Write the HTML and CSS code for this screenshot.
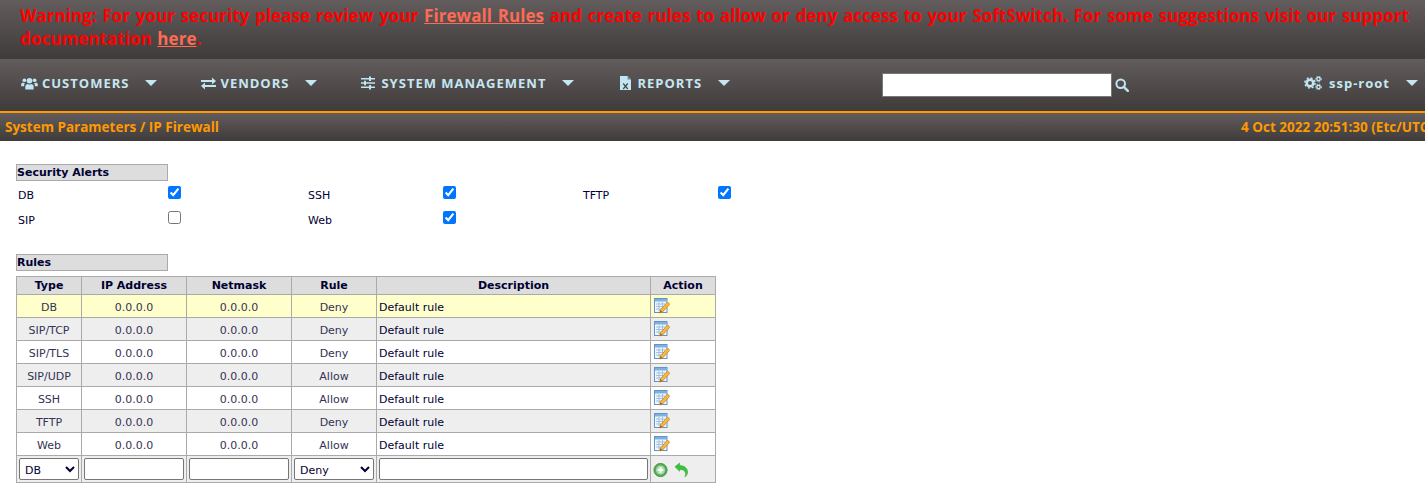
FILE: index.html
```html
<!DOCTYPE html>
<html lang="en">
<head>
<meta charset="utf-8">
<title>IP Firewall</title>
<link rel="stylesheet" href="styles.css">
</head>
<body>
<svg class="defs" width="0" height="0">
  <defs>
    <symbol id="edit" viewBox="0 0 16 16">
      <rect x="0.5" y="0.5" width="12.5" height="14" fill="#f2f7fc" stroke="#5f94cc"/>
      <rect x="1" y="1" width="12" height="2.500" fill="#7fb0e0"/>
      <path d="M2 6h9M2 8.500h9M2 11h9M5 4v9M8.500 4v9" stroke="#9dbfe3" stroke-width="1"/>
      <path d="M13.500 4l2.300 2.300-7.300 7.700-2.800 1 .6-3z" fill="#f7b93c" stroke="#c9802a" stroke-width=".8"/>
      <path d="M6.300 12l-.6 3 2.800-1z" fill="#a8642a"/>
    </symbol>
  </defs>
</svg>

<header class="warning">
  <p class="warning-text">Warning: For your security please review your <a href="#">Firewall Rules</a> and create rules to allow or deny access to your SoftSwitch. For some suggestions visit our support documentation <a href="#">here</a>.</p>
</header>

<nav class="nav">
  <div class="nav-item">
    <svg class="ico ico-users" viewBox="0 0 18 14"><circle cx="9" cy="4" r="3"/><circle cx="3.500" cy="3.500" r="2"/><circle cx="14.500" cy="3.500" r="2"/><path d="M4.500 13.500v-3c0-2 1.500-3 2.500-3 .5.400 1.200.6 2 .6s1.500-.2 2-.6c1 0 2.500 1 2.500 3v3z"/><path d="M0 9c0-2 .8-3 1.800-3 .5.500 1.100.7 1.800.7.200 0 .4 0 .6-.1-.5.600-1 1.500-1 3V10H0zM18 9c0-2-.8-3-1.800-3-.5.500-1.100.7-1.800.7-.2 0-.4 0-.6-.1.500.6 1 1.500 1 3v.4H18z"/></svg>
    <span class="nav-label">CUSTOMERS</span><span class="caret"></span>
  </div>
  <div class="nav-item">
    <svg class="ico ico-swap" viewBox="0 0 15 13"><path d="M0 3h11V.5L15 4l-4 3.500V5H0zM15 8H4V5.500L0 9l4 3.500V10h11z"/></svg>
    <span class="nav-label">VENDORS</span><span class="caret"></span>
  </div>
  <div class="nav-item">
    <svg class="ico ico-sliders" viewBox="0 0 14 14"><path d="M0 2h8V.5h2V2h4v1.500h-4V5H8V3.500H0zM0 6.300h3V4.800h2v1.500h9v1.500H5v1.500H3V7.800H0zM0 10.500h8V9h2v1.500h4V12h-4v1.500H8V12H0z"/></svg>
    <span class="nav-label">SYSTEM MANAGEMENT</span><span class="caret"></span>
  </div>
  <div class="nav-item">
    <svg class="ico ico-file" viewBox="0 0 11 14"><path d="M0 0h7.500L11 3.500V14H0z"/><path d="M7.500 0L11 3.500H7.500z" fill="#6d8a95"/><path d="M3.200 7.500l4.600 5.500M7.800 7.500l-4.600 5.500" stroke="#4a4646" stroke-width="1.200" fill="none"/></svg>
    <span class="nav-label">REPORTS</span><span class="caret"></span>
  </div>
  <form class="search">
    <input class="search-input" type="text" aria-label="Search">
    <svg class="ico ico-search" viewBox="0 0 14 14"><circle cx="5.700" cy="5.700" r="4.300" fill="none" stroke="#bfe6f2" stroke-width="2"/><path d="M8.800 8.800l4 4" stroke="#bfe6f2" stroke-width="2.400" stroke-linecap="round"/></svg>
  </form>
  <div class="nav-item nav-user">
    <svg class="ico ico-cogs" viewBox="0 0 18 14"><g fill="none" stroke="#bfe6f2"><circle cx="6" cy="7" r="3.300" stroke-width="2.600"/><circle cx="6" cy="7" r="5.100" stroke-width="1.500" stroke-dasharray="2 2"/><circle cx="14.500" cy="3" r="1.700" stroke-width="1.400"/><circle cx="14.500" cy="3" r="2.900" stroke-width="1" stroke-dasharray="1.400 1.400"/><circle cx="14.500" cy="11" r="1.700" stroke-width="1.400"/><circle cx="14.500" cy="11" r="2.900" stroke-width="1" stroke-dasharray="1.400 1.400"/></g></svg>
    <span class="nav-label nav-user-label">ssp-root</span><span class="caret"></span>
  </div>
</nav>

<div class="crumbbar">
  <span>System Parameters / IP Firewall</span>
  <span class="clock">4 Oct 2022 20:51:30 (Etc/UTC)</span>
</div>

<main class="content">
  <h2 class="section-title">Security Alerts</h2>
  <div class="alerts">
    <span>DB</span><input type="checkbox" checked aria-label="DB">
    <span>SSH</span><input type="checkbox" checked aria-label="SSH">
    <span>TFTP</span><input type="checkbox" checked aria-label="TFTP">
    <span>SIP</span><input type="checkbox" aria-label="SIP">
    <span>Web</span><input type="checkbox" checked aria-label="Web">
  </div>

  <h2 class="section-title">Rules</h2>
  <table class="rules">
    <colgroup>
      <col class="c-type"><col class="c-ip"><col class="c-mask"><col class="c-rule"><col class="c-desc"><col class="c-act">
    </colgroup>
    <thead>
      <tr><th>Type</th><th>IP Address</th><th>Netmask</th><th>Rule</th><th>Description</th><th>Action</th></tr>
    </thead>
    <tbody>
      <tr class="hover"><td>DB</td><td>0.0.0.0</td><td>0.0.0.0</td><td>Deny</td><td class="left">Default rule</td><td class="left"><svg class="edit"><use href="#edit"/></svg></td></tr>
      <tr class="odd"><td>SIP/TCP</td><td>0.0.0.0</td><td>0.0.0.0</td><td>Deny</td><td class="left">Default rule</td><td class="left"><svg class="edit"><use href="#edit"/></svg></td></tr>
      <tr><td>SIP/TLS</td><td>0.0.0.0</td><td>0.0.0.0</td><td>Deny</td><td class="left">Default rule</td><td class="left"><svg class="edit"><use href="#edit"/></svg></td></tr>
      <tr class="odd"><td>SIP/UDP</td><td>0.0.0.0</td><td>0.0.0.0</td><td>Allow</td><td class="left">Default rule</td><td class="left"><svg class="edit"><use href="#edit"/></svg></td></tr>
      <tr><td>SSH</td><td>0.0.0.0</td><td>0.0.0.0</td><td>Allow</td><td class="left">Default rule</td><td class="left"><svg class="edit"><use href="#edit"/></svg></td></tr>
      <tr class="odd"><td>TFTP</td><td>0.0.0.0</td><td>0.0.0.0</td><td>Deny</td><td class="left">Default rule</td><td class="left"><svg class="edit"><use href="#edit"/></svg></td></tr>
      <tr><td>Web</td><td>0.0.0.0</td><td>0.0.0.0</td><td>Allow</td><td class="left">Default rule</td><td class="left"><svg class="edit"><use href="#edit"/></svg></td></tr>
      <tr class="odd form-row">
        <td><select class="field" aria-label="Type"><option>DB</option><option>SIP/TCP</option><option>SIP/TLS</option><option>SIP/UDP</option><option>SSH</option><option>TFTP</option><option>Web</option></select></td>
        <td><input class="field" type="text" aria-label="IP Address"></td>
        <td><input class="field" type="text" aria-label="Netmask"></td>
        <td><select class="field" aria-label="Rule"><option>Deny</option><option>Allow</option></select></td>
        <td><input class="field" type="text" aria-label="Description"></td>
        <td class="left actions">
          <svg class="act" viewBox="0 0 16 16"><circle cx="8" cy="8" r="7" fill="#57ad57" stroke="#3e8f3e"/><circle cx="8" cy="8" r="4.800" fill="#a9dba9"/><path d="M8 5v6M5 8h6" stroke="#fff" stroke-width="2.200"/></svg>
          <svg class="act" viewBox="0 0 16 16"><path d="M1 4.500L6 .5v2.700c5 0 8.500 3 8.500 7 0 2-1 4-3 5.300 1-1.500 1.200-3 .7-4.500C11.500 8.500 9 7.300 6 7.500v1.900z" fill="#3cc23c" stroke="#2a9a2a" stroke-width=".5"/></svg>
        </td>
      </tr>
    </tbody>
  </table>
</main>
</body>
</html>
```
FILE: styles.css
```css
* { box-sizing: border-box; }

html, body {
  margin: 0;
  padding: 0;
  background: #fff;
  overflow: hidden;
}

body {
  font-family: "DejaVu Sans", Verdana, sans-serif;
  font-size: 11px;
  color: #000033;
}

.defs { display: block; height: 0; }

.warning,
.nav,
.crumbbar {
  background: linear-gradient(to bottom, #625d5c 0%, #3f3b3a 100%);
  font-family: "Open Sans", sans-serif;
  font-weight: 700;
}

.warning {
  height: 59px;
  padding: 4px 0 0 20px;
}

.warning-text {
  margin: 0;
  font-size: 17px;
  line-height: 23px;
  color: #ff0000;
  letter-spacing: 0.05px;
  word-spacing: 1.2px;
  width: 1405px;
}

.warning-text a { color: #ff6a55; text-decoration: underline; }

.nav {
  height: 54px;
  border-bottom: 2px solid #ff9900;
  display: flex;
  align-items: center;
  padding: 0 7px 0 21px;
}

.nav-item {
  display: flex;
  align-items: center;
  margin-right: 44px;
  padding-bottom: 4px;
}

.ico { display: block; fill: #bfe6f2; flex: none; }
.ico-users { width: 17px; height: 13px; margin-right: 4px; }
.ico-swap { width: 15px; height: 13px; margin-right: 4px; }
.ico-sliders { width: 14px; height: 14px; margin-right: 6px; }
.ico-file { width: 11px; height: 14px; margin: 0 6px 0 2px; }
.ico-search { width: 14px; height: 14px; margin-left: 3px; }
.ico-cogs { width: 18px; height: 14px; margin-right: 7px; }

.nav-label {
  font-size: 13px;
  letter-spacing: 1px;
  color: #c5e7f2;
  line-height: 18px;
}

.caret {
  width: 0;
  height: 0;
  margin-left: 16px;
  border-left: 6px solid transparent;
  border-right: 6px solid transparent;
  border-top: 6px solid #c5e7f2;
}

.search {
  display: flex;
  align-items: center;
  margin-left: 108px;
}

.search-input {
  width: 230px;
  height: 24px;
  padding: 0 4px;
  border: 1px solid #777;
  background: #fff;
  border-radius: 0;
  outline: none;
}

.nav-user { margin: 0 0 0 auto; }

.crumbbar {
  height: 28px;
  display: flex;
  justify-content: space-between;
  align-items: center;
  padding-left: 5px;
  font-size: 13.500px;
  color: #ff9900;
  white-space: nowrap;
  overflow: hidden;
}

.clock { margin-right: -8px; }

.content { padding: 23px 0 0 16px; }

.section-title {
  width: 152px;
  height: 17px;
  margin: 0;
  padding-left: 0;
  background: #dddddd;
  border: 1px solid #aaaaaa;
  font-size: 11px;
  line-height: 15px;
  font-weight: 700;
  color: #000033;
}

.alerts {
  display: grid;
  grid-template-columns: 150px 140px 135px 140px 135px 14px;
  grid-auto-rows: 25px;
  align-items: center;
  height: 73px;
  padding: 0 0 0 2px;
}

.alerts span { padding-top: 3px; }

.alerts input {
  width: 13px;
  height: 13px;
  margin: -3px 0 0 0;
  accent-color: #0075ff;
}

.rules {
  border-collapse: collapse;
  table-layout: fixed;
  width: 699px;
  margin-top: 5px;
  border: 1px solid #aaaaaa;
}

.c-type { width: 65px; }
.c-ip { width: 105px; }
.c-mask { width: 105px; }
.c-rule { width: 85px; }
.c-desc { width: 274px; }
.c-act { width: 65px; }

.rules th, .rules td {
  border: 1px solid #aaaaaa;
  padding: 0 2px;
  text-align: center;
  font-size: 11px;
  overflow: hidden;
}

.rules th {
  height: 18px;
  background: #dddddd;
  font-weight: 700;
  color: #000033;
  line-height: 17px;
}

.rules td { height: 23px; padding-top: 3px; line-height: 19px; color: #333355; }
.rules td.left { text-align: left; color: #000033; }

.hover td { background: #ffffcc; }
.odd td { background: #eeeeee; }

.edit { display: block; width: 16px; height: 16px; margin: -3px 0 0 1px; }

.rules .form-row td { height: 27px; padding: 0 2px; }

.field {
  display: block;
  width: 100%;
  height: 22px;
  font-family: "DejaVu Sans", Verdana, sans-serif;
  font-size: 11px;
  color: #000033;
  background: #fff;
  border: 1px solid #767676;
  border-radius: 2px;
  padding: 2px 1px 0;
}

.actions { white-space: nowrap; }

.rules .actions { padding-left: 3px; }

.act { display: inline-block; width: 15px; height: 16px; margin-right: 2px; vertical-align: middle; }
```
